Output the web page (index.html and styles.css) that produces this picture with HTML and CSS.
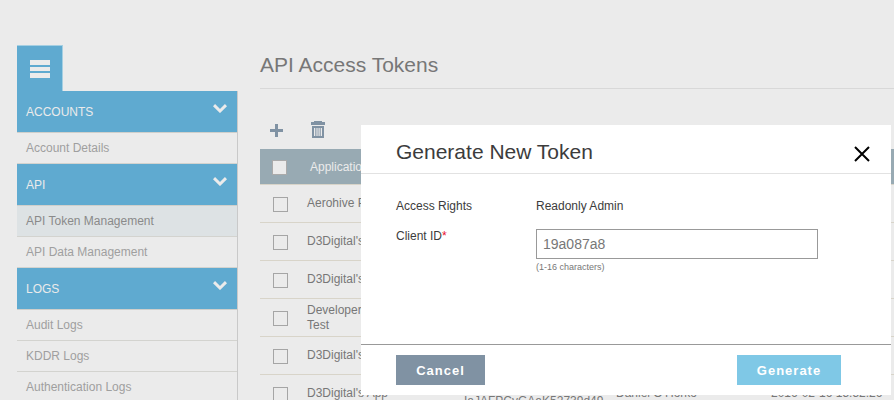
FILE: index.html
```html
<!DOCTYPE html>
<html lang="en">
<head>
<meta charset="utf-8">
<title>API Access Tokens</title>
<link rel="stylesheet" href="styles.css">
</head>
<body>
<div class="page">
  <aside class="sidebar">
    <button class="menu-tab" aria-label="Menu"><span></span><span></span><span></span></button>
    <nav class="nav">
      <div class="group"><span>ACCOUNTS</span><svg class="chev" viewBox="0 0 14 9"><path d="M1 1.2 7 7 13 1.2"/></svg></div>
      <a class="item">Account Details</a>
      <div class="group"><span>API</span><svg class="chev" viewBox="0 0 14 9"><path d="M1 1.2 7 7 13 1.2"/></svg></div>
      <a class="item active">API Token Management</a>
      <a class="item">API Data Management</a>
      <div class="group"><span>LOGS</span><svg class="chev" viewBox="0 0 14 9"><path d="M1 1.2 7 7 13 1.2"/></svg></div>
      <a class="item">Audit Logs</a>
      <a class="item">KDDR Logs</a>
      <a class="item">Authentication Logs</a>
    </nav>
  </aside>
  <main class="main">
    <h1>API Access Tokens</h1>
    <div class="toolbar">
      <svg class="plus" viewBox="0 0 13 13"><path d="M5 0h3v5h5v3H8v5H5V8H0V5h5z"/></svg>
      <svg class="trash" viewBox="0 0 14 17"><path fill-rule="evenodd" d="M3 0h8v1h3v3H0V1h3zM1 5h12v12H1zM3 7v8h1.3V7zM5.4 7v8h1.2V7zM7.5 7v8h1.2V7zM9.7 7v8H11V7z"/></svg>
    </div>
    <div class="table">
      <div class="row head"><i class="box"></i><span class="app">Application</span></div>
      <div class="row"><i class="box"></i><span class="app">Aerohive Portal</span></div>
      <div class="row"><i class="box"></i><span class="app">D3Digital's App</span></div>
      <div class="row"><i class="box"></i><span class="app">D3Digital's App</span></div>
      <div class="row"><i class="box"></i><span class="app two-line">Developer<br>Test</span></div>
      <div class="row"><i class="box"></i><span class="app">D3Digital's App</span></div>
      <div class="row"><i class="box"></i><span class="app">D3Digital's App</span><span class="token">IaJAFPCvGAaK52739d49</span><span class="owner">Daniel O'Horko</span><span class="date">2016-02-16 15:52:26</span></div>
    </div>
  </main>
</div>
<section class="modal" role="dialog">
  <header><h2>Generate New Token</h2>
    <svg class="close" viewBox="0 0 16 16"><path d="M1 1 15 15M15 1 1 15"/></svg>
  </header>
  <div class="form">
    <label>Access Rights</label><span class="value">Readonly Admin</span>
    <label>Client ID<b>*</b></label>
    <div class="field"><div class="input">19a087a8</div><small>(1-16 characters)</small></div>
  </div>
  <footer><button class="btn">Cancel</button><button class="btn primary">Generate</button></footer>
</section>
</body>
</html>
```
FILE: styles.css
```css
* { box-sizing: border-box; }
body {
  margin: 0;
  height: 400px;
  overflow: hidden;
  background: #ebebeb;
  font: 12px/15px "Liberation Sans", Arial, sans-serif;
  color: #777;
}
button { border: 0; font: inherit; }
.page { display: flex; height: 400px; overflow: hidden; padding-left: 17px; }

.sidebar { width: 221px; flex: none; padding-top: 45px; }
.menu-tab {
  display: flex;
  flex-direction: column;
  gap: 2px;
  width: 46px;
  height: 46px;
  padding: 14px 12px 0 13px;
  background: #5faad0;
  border-top: 1px solid #a5cfe2;
  border-right: 1px solid #a5cfe2;
}
.menu-tab span { width: 20px; height: 4.6px; background: #ebebeb; }
.nav { border-right: 1px solid #c9c9c9; }
.group {
  display: flex;
  justify-content: space-between;
  height: 42px;
  padding: 14px 10px 0 9px;
  background: #5faad0;
  border-bottom: 1px solid #cfcfcb;
  color: #ebebeb;
}
.chev { width: 14px; height: 9px; margin-top: -1px; fill: none; stroke: #ebebeb; stroke-width: 3; }
.item {
  display: block;
  height: 31px;
  padding: 8px 0 0 9px;
  border-bottom: 1px solid #d3d3cf;
  color: #9f9f9f;
}
.item.active { background: #dde2e4; color: #8a8a8a; }

.main { flex: none; width: 660px; margin-left: 22px; }
h1 {
  height: 89px;
  margin: 0;
  padding-top: 53px;
  border-bottom: 1px solid #d8d8d8;
  font-size: 21px;
  font-weight: 400;
  line-height: 24px;
}
.toolbar { display: flex; height: 60px; padding: 32px 0 0 10px; fill: #8092a3; }
.plus { width: 13px; height: 13px; margin-top: 3px; }
.trash { width: 14px; height: 17px; margin-left: 28px; }
.row {
  display: grid;
  grid-template-columns: 46px 157px 152px 155px 140px;
  height: 38px;
  padding-left: 1px;
  border-bottom: 1px solid #d8d4c9;
}
.row span { white-space: nowrap; }
.box { width: 15px; height: 15px; margin: 12px 0 0 12px; border: 1px solid #a5a5a5; }
.app { padding-top: 11px; }
.app.two-line { padding-top: 4px; }
.token { padding-top: 19px; }
.owner, .date { padding-top: 11px; }
.head { height: 36px; background: #98aab3; color: #ebebeb; }
.head .box { margin: 11px 0 0 11px; background: #ebebeb; border-color: #aaa; }
.head .app { padding-left: 3px; }

.modal {
  position: absolute;
  left: 361px;
  top: 125px;
  display: flex;
  flex-direction: column;
  width: 530px;
  height: 270px;
  background: #fff;
  color: #3c3c3c;
}
.modal header {
  display: flex;
  justify-content: space-between;
  height: 49px;
  padding: 15px 21px 0 35px;
  border-bottom: 1px solid #e2e2e2;
}
h2 { margin: 0; font-size: 21px; font-weight: 400; line-height: 24px; }
.close { width: 16px; height: 16px; margin-top: 6px; fill: none; stroke: #000; stroke-width: 2; }
.form {
  display: grid;
  grid-template-columns: 140px 282px;
  grid-template-rows: 30px auto;
  flex: 1;
  padding: 25px 0 0 35px;
}
.form b { color: #e8112d; font-weight: 400; }
.input {
  height: 30px;
  padding: 7px 6px;
  border: 1px solid #999;
  color: #777;
  font-size: 14px;
  line-height: 15px;
}
.field small { display: block; margin-top: 3px; font-size: 9px; line-height: 11px; color: #777; }
.modal footer {
  display: flex;
  justify-content: space-between;
  height: 51px;
  padding: 10px 50px 10px 35px;
  border-top: 1px solid #999;
}
.btn {
  width: 89px;
  height: 30px;
  padding: 0;
  background: #8092a3;
  color: #fff;
  font-size: 13px;
  font-weight: 700;
  letter-spacing: 1px;
}
.primary { width: 104px; background: #7fc8e6; }
```
